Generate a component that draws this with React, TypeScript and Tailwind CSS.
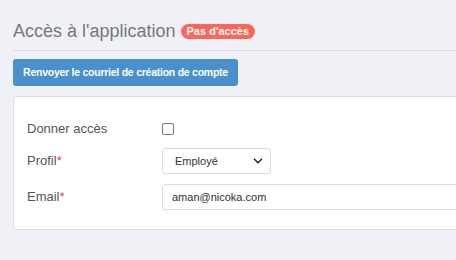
import { ChevronDown } from "lucide-react";

export default function App() {
  return (
    <div
      className="w-[456px] h-[260px] overflow-hidden bg-[#f0f1f6]"
      style={{ fontFamily: '"Liberation Sans", Arial, sans-serif' }}
    >
      <div className="w-[520px] pl-[13px] pt-[20px]">
        {/* Title */}
        <div className="flex items-center gap-[5px] h-[22px]">
          <h2 className="text-[18px] text-[#777] leading-none">Accès à l'application</h2>
          <span className="bg-[#ff6659] text-white text-[11px] font-bold leading-none rounded-full px-[6px] h-[15px] flex items-center">
            Pas d'accès
          </span>
        </div>
        <div className="border-t border-[#dcdcdc] mt-[8px]" />

        {/* Resend button */}
        <button className="mt-[8px] h-[27px] w-[225px] whitespace-nowrap bg-[#4990cd] text-white text-[10.5px] tracking-[-0.25px] font-bold rounded-[3px]">
          Renvoyer le courriel de création de compte
        </button>

        {/* Card */}
        <div className="mt-[10px] bg-white border border-[#dcdcdc] rounded-[4px] pt-[25px] pb-[19px] px-[13px]">
          <div className="flex items-center h-[14px] mb-[12px]">
            <label className="w-[135px] text-[13px] text-[#555]">Donner accès</label>
            <input type="checkbox" className="w-[12px] h-[12px] m-0 appearance-none border border-[#767676] rounded-[2px] bg-white" />
          </div>
          <div className="flex items-center h-[26px] mb-[10px]">
            <label className="w-[135px] text-[13px] text-[#555]">
              Profil<span className="text-[#e5484d]">*</span>
            </label>
            <div className="w-[109px] h-[26px] border border-[#dcdcdc] rounded-[3px] flex items-center justify-between pl-[12px] pr-[5px] text-[11px] text-[#333]">
              <span>Employé</span>
              <ChevronDown className="w-[14px] h-[14px] text-[#333]" strokeWidth={3} />
            </div>
          </div>
          <div className="flex items-center h-[26px]">
            <label className="w-[135px] text-[13px] text-[#555]">
              Email<span className="text-[#e5484d]">*</span>
            </label>
            <div className="flex-1 h-[26px] border border-[#dcdcdc] rounded-[3px] flex items-center pl-[9px] text-[11px] text-[#333]">
              aman@nicoka.com
            </div>
          </div>
        </div>
      </div>
    </div>
  );
}
